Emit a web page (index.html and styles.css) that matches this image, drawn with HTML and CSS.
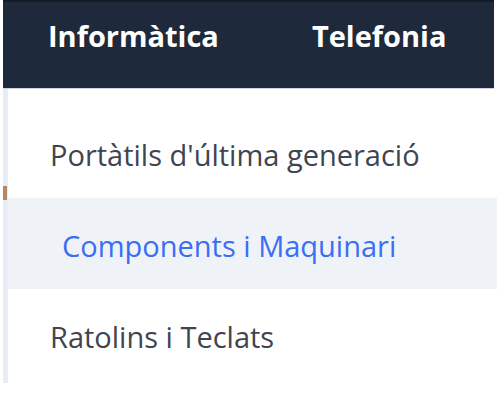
FILE: index.html
```html
<!DOCTYPE html>
<html lang="ca">
<head>
<meta charset="utf-8">
<title>Menú</title>
<link rel="stylesheet" href="styles.css">
</head>
<body>
<div class="page">
  <nav class="topbar">
    <a class="tab">Informàtica</a>
    <a class="tab">Telefonia</a>
  </nav>
  <div class="panel">
    <span class="thumb"></span>
    <ul class="menu">
      <li class="item">Portàtils d'última generació</li>
      <li class="item active">Components i Maquinari</li>
      <li class="item">Ratolins i Teclats</li>
    </ul>
  </div>
</div>
</body>
</html>
```
FILE: styles.css
```css
html, body {
  margin: 0;
  padding: 0;
  background: #ffffff;
}
body {
  font-family: "Open Sans", "Noto Sans", sans-serif;
}
.page {
  margin-left: 3px;
  width: 491px;
}
.topbar {
  display: flex;
  align-items: flex-start;
  box-sizing: border-box;
  height: 89px;
  background: #1e293b;
  border-top: 2px solid #151a24;
  border-bottom: 1px solid #cbd5e1;
  padding-left: 45px;
  padding-top: 14px;
  gap: 93px;
}
.tab {
  color: #ffffff;
  font-weight: 700;
  font-size: 29px;
  line-height: 40px;
  text-decoration: none;
}
.panel {
  position: relative;
  border-left: 5px solid #e8edf5;
  padding-top: 18px;
  padding-bottom: 3px;
  width: 489px;
}
.thumb {
  position: absolute;
  left: -5px;
  top: 97px;
  width: 4px;
  height: 14px;
  background: #b5876a;
}
.menu {
  list-style: none;
  margin: 0;
  padding: 0;
}
.item {
  box-sizing: border-box;
  height: 91px;
  display: flex;
  align-items: center;
  padding-left: 42px;
  padding-top: 4px;
  font-size: 29px;
  color: #3f4550;
}
.item.active {
  background: #eff3f8;
  color: #3b6ef5;
  padding-left: 54px;
}
```
